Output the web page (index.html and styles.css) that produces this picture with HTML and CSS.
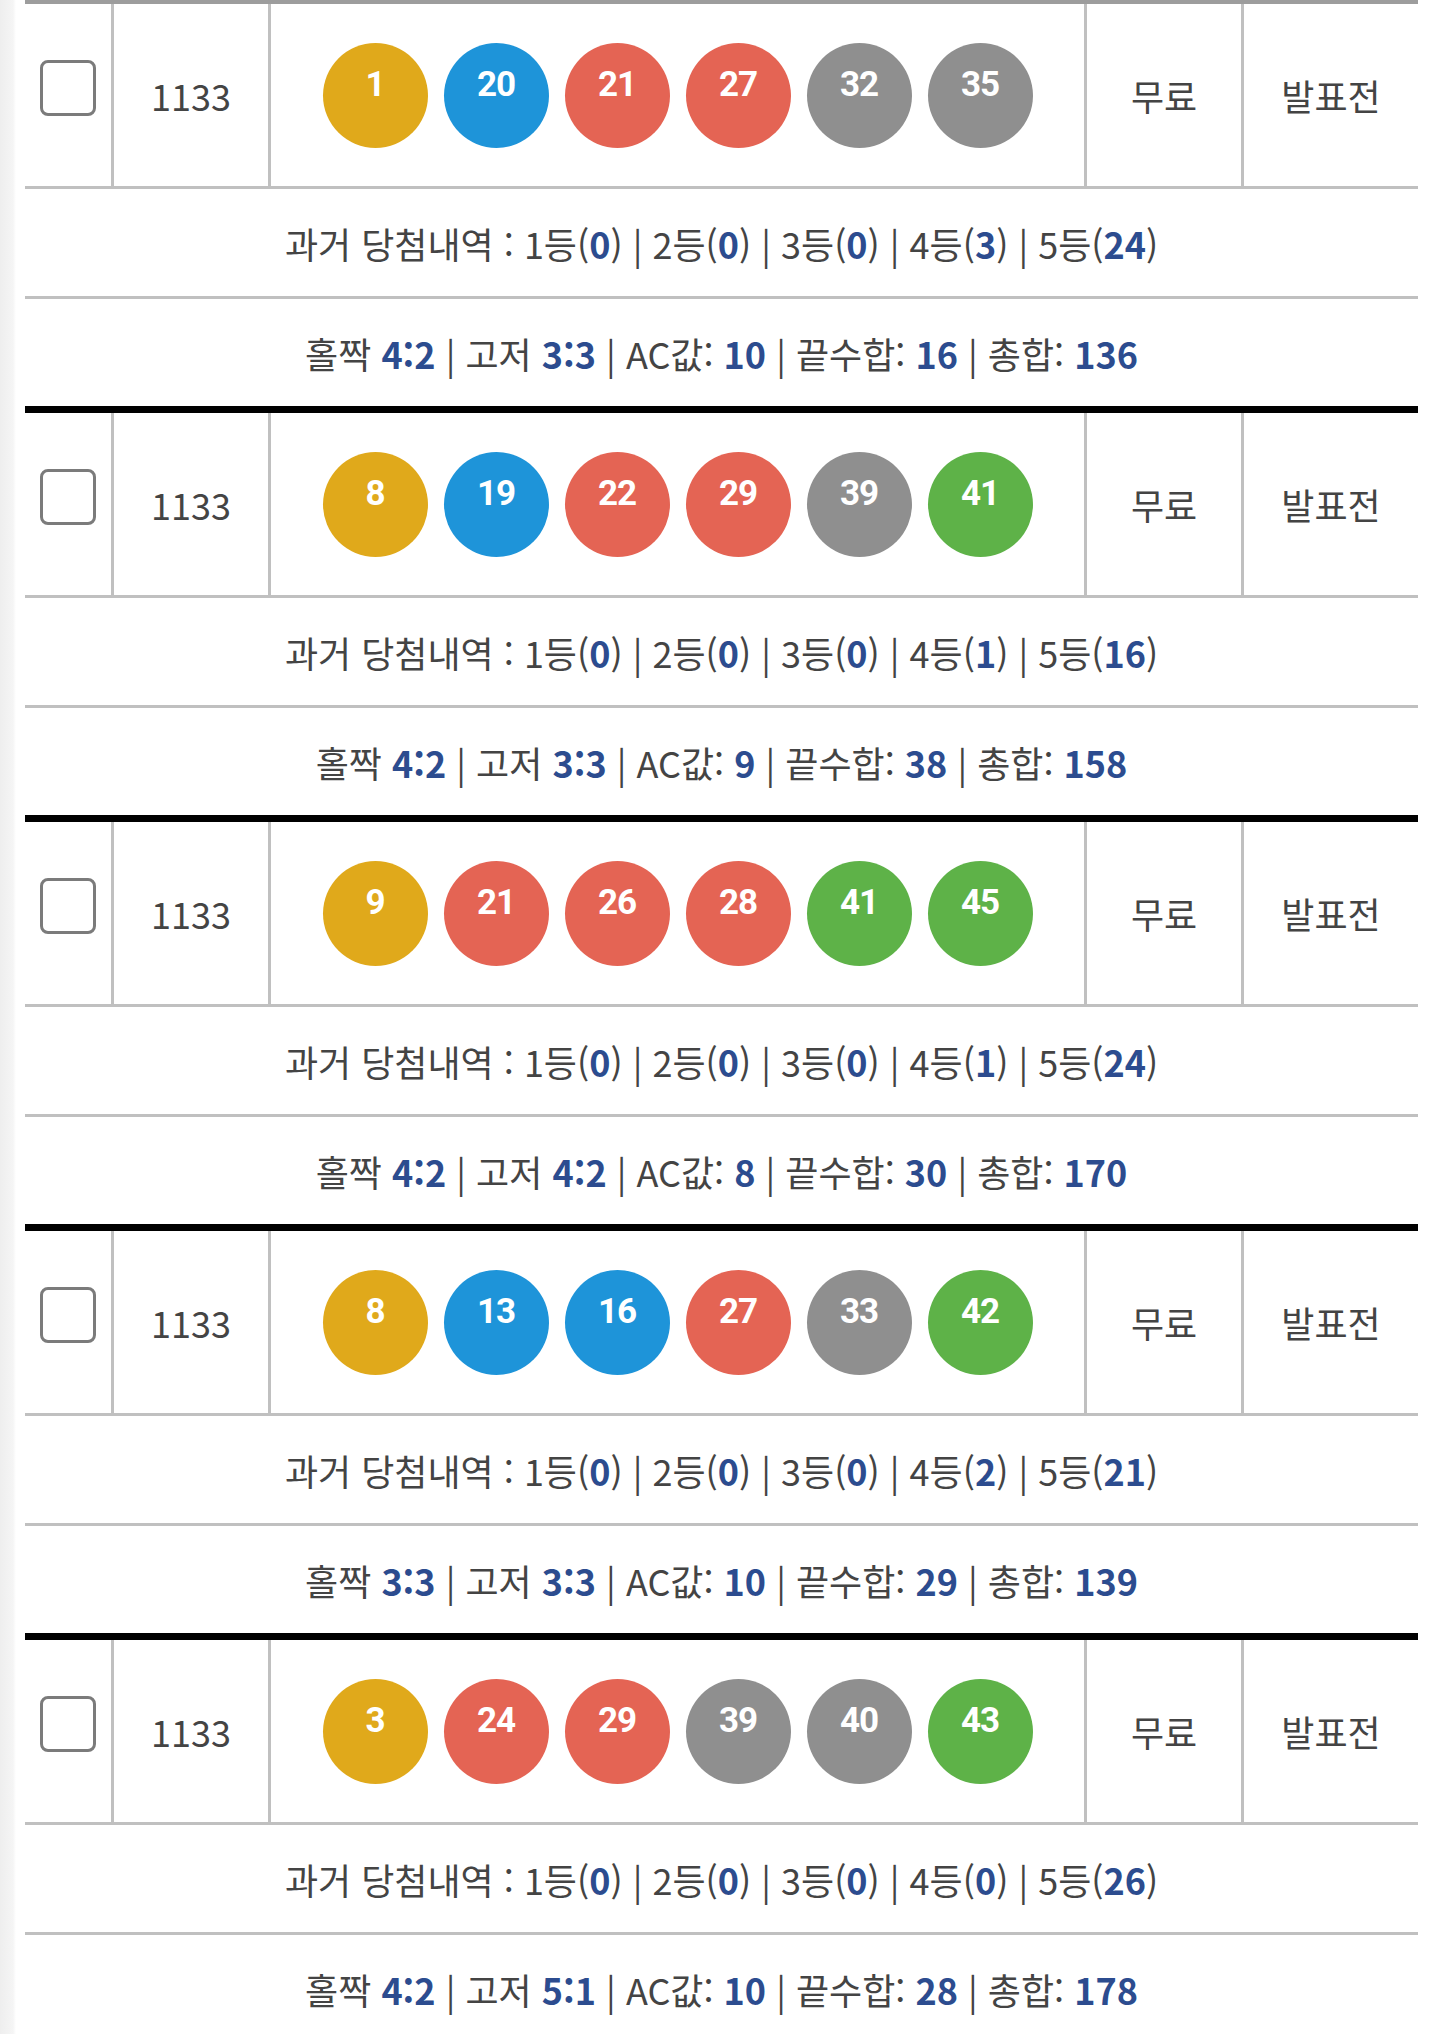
FILE: index.html
```html
<!DOCTYPE html>
<html lang="ko">
<head>
  <meta charset="UTF-8">
  <title>로또 번호 목록</title>
  <meta name="viewport" content="width=device-width, initial-scale=1.0">
  <link rel="stylesheet" href="styles.css">
</head>
<body>

  <div class="list">

    <div class="ticket">
      <div class="main-row">
        <div class="cell check"><input type="checkbox"></div>
        <div class="cell round">1133</div>
        <div class="cell balls">
          <span class="ball yellow">1</span>
          <span class="ball blue">20</span>
          <span class="ball red">21</span>
          <span class="ball red">27</span>
          <span class="ball gray">32</span>
          <span class="ball gray">35</span>
        </div>
        <div class="cell type">무료</div>
        <div class="cell result">발표전</div>
      </div>
      <div class="info-row">과거 당첨내역 : 1등(<b>0</b>) | 2등(<b>0</b>) | 3등(<b>0</b>) | 4등(<b>3</b>) | 5등(<b>24</b>)</div>
      <div class="info-row">홀짝 <b>4:2</b> | 고저 <b>3:3</b> | AC값: <b>10</b> | 끝수합: <b>16</b> | 총합: <b>136</b></div>
    </div>

    <div class="ticket">
      <div class="main-row">
        <div class="cell check"><input type="checkbox"></div>
        <div class="cell round">1133</div>
        <div class="cell balls">
          <span class="ball yellow">8</span>
          <span class="ball blue">19</span>
          <span class="ball red">22</span>
          <span class="ball red">29</span>
          <span class="ball gray">39</span>
          <span class="ball green">41</span>
        </div>
        <div class="cell type">무료</div>
        <div class="cell result">발표전</div>
      </div>
      <div class="info-row">과거 당첨내역 : 1등(<b>0</b>) | 2등(<b>0</b>) | 3등(<b>0</b>) | 4등(<b>1</b>) | 5등(<b>16</b>)</div>
      <div class="info-row">홀짝 <b>4:2</b> | 고저 <b>3:3</b> | AC값: <b>9</b> | 끝수합: <b>38</b> | 총합: <b>158</b></div>
    </div>

    <div class="ticket">
      <div class="main-row">
        <div class="cell check"><input type="checkbox"></div>
        <div class="cell round">1133</div>
        <div class="cell balls">
          <span class="ball yellow">9</span>
          <span class="ball red">21</span>
          <span class="ball red">26</span>
          <span class="ball red">28</span>
          <span class="ball green">41</span>
          <span class="ball green">45</span>
        </div>
        <div class="cell type">무료</div>
        <div class="cell result">발표전</div>
      </div>
      <div class="info-row">과거 당첨내역 : 1등(<b>0</b>) | 2등(<b>0</b>) | 3등(<b>0</b>) | 4등(<b>1</b>) | 5등(<b>24</b>)</div>
      <div class="info-row">홀짝 <b>4:2</b> | 고저 <b>4:2</b> | AC값: <b>8</b> | 끝수합: <b>30</b> | 총합: <b>170</b></div>
    </div>

    <div class="ticket">
      <div class="main-row">
        <div class="cell check"><input type="checkbox"></div>
        <div class="cell round">1133</div>
        <div class="cell balls">
          <span class="ball yellow">8</span>
          <span class="ball blue">13</span>
          <span class="ball blue">16</span>
          <span class="ball red">27</span>
          <span class="ball gray">33</span>
          <span class="ball green">42</span>
        </div>
        <div class="cell type">무료</div>
        <div class="cell result">발표전</div>
      </div>
      <div class="info-row">과거 당첨내역 : 1등(<b>0</b>) | 2등(<b>0</b>) | 3등(<b>0</b>) | 4등(<b>2</b>) | 5등(<b>21</b>)</div>
      <div class="info-row">홀짝 <b>3:3</b> | 고저 <b>3:3</b> | AC값: <b>10</b> | 끝수합: <b>29</b> | 총합: <b>139</b></div>
    </div>

    <div class="ticket">
      <div class="main-row">
        <div class="cell check"><input type="checkbox"></div>
        <div class="cell round">1133</div>
        <div class="cell balls">
          <span class="ball yellow">3</span>
          <span class="ball red">24</span>
          <span class="ball red">29</span>
          <span class="ball gray">39</span>
          <span class="ball gray">40</span>
          <span class="ball green">43</span>
        </div>
        <div class="cell type">무료</div>
        <div class="cell result">발표전</div>
      </div>
      <div class="info-row">과거 당첨내역 : 1등(<b>0</b>) | 2등(<b>0</b>) | 3등(<b>0</b>) | 4등(<b>0</b>) | 5등(<b>26</b>)</div>
      <div class="info-row">홀짝 <b>4:2</b> | 고저 <b>5:1</b> | AC값: <b>10</b> | 끝수합: <b>28</b> | 총합: <b>178</b></div>
    </div>

  </div>

</body>
</html>
```

FILE: styles.css
```css
* {
  margin: 0;
  padding: 0;
  box-sizing: border-box;
}

body {
  font-family: "Noto Sans CJK KR", "Noto Sans", sans-serif;
  color: #444;
  background: linear-gradient(to right, #eeeeee 0, #f5f5f5 13px, #fff 16px) no-repeat;
  background-color: #fff;
  padding: 0 20px 0 25px;
}

.ticket {
  border-top: 7px solid #000;
}

.ticket:first-child {
  border-top: 4px solid #9d9d9d;
}

.main-row {
  display: flex;
  height: 185px;
  border-bottom: 3px solid #c0c0c0;
}

.cell {
  display: flex;
  align-items: center;
  justify-content: center;
  border-right: 3px solid #c0c0c0;
  font-size: 36px;
}

.cell.check {
  width: 89px;
}

.cell.check input {
  appearance: none;
  -webkit-appearance: none;
  width: 56px;
  height: 56px;
  border: 3px solid #7b7b7b;
  border-radius: 8px;
  background: #fff;
  margin-bottom: 14px;
}

.cell.round {
  width: 157px;
}

.cell.balls {
  width: 816px;
  gap: 16px;
}

.cell.type {
  width: 157px;
}

.cell.result {
  flex: 1;
  border-right: none;
}

.ball {
  width: 105px;
  height: 105px;
  border-radius: 50%;
  display: flex;
  align-items: center;
  justify-content: center;
  padding-bottom: 22px;
  font-family: Roboto, "Liberation Sans", sans-serif;
  font-weight: 700;
  font-size: 35px;
  letter-spacing: -1px;
  color: #fff;
}

.ball.yellow { background-color: #e0a91b; }
.ball.blue { background-color: #1e94d9; }
.ball.red { background-color: #e46454; }
.ball.gray { background-color: #8f8f8f; }
.ball.green { background-color: #5eb248; }

.info-row {
  height: 110px;
  display: flex;
  align-items: center;
  justify-content: center;
  font-size: 36px;
  white-space: pre;
  border-bottom: 3px solid #c0c0c0;
}

.info-row:last-child {
  height: 107px;
  border-bottom: none;
}

.info-row b {
  color: #2c4c8f;
  font-weight: 700;
}
```
